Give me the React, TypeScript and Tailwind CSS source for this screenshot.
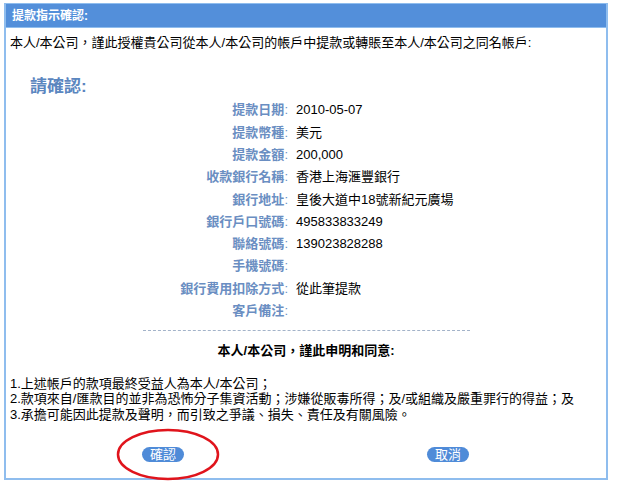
import React from 'react';

const rows: { label: string; value: string }[] = [
  { label: '提款日期', value: '2010-05-07' },
  { label: '提款幣種', value: '美元' },
  { label: '提款金額', value: '200,000' },
  { label: '收款銀行名稱', value: '香港上海滙豐銀行' },
  { label: '銀行地址', value: '皇後大道中18號新紀元廣場' },
  { label: '銀行戶口號碼', value: '495833833249' },
  { label: '聯絡號碼', value: '139023828288' },
  { label: '手機號碼', value: '' },
  { label: '銀行費用扣除方式', value: '從此筆提款' },
  { label: '客戶備注', value: '' },
];

const terms = [
  '1.上述帳戶的款項最終受益人為本人/本公司；',
  '2.款項來自/匯款目的並非為恐怖分子集資活動；涉嫌從販毒所得；及/或組織及嚴重罪行的得益；及',
  '3.承擔可能因此提款及聲明，而引致之爭議、損失、責任及有關風險。',
];

export default function App() {
  return (
    <div
      className="relative h-[498px] w-[635px] bg-white pl-[4px] pt-[3px] text-[13px] text-black"
      style={{ fontFamily: '"Liberation Sans", "Noto Sans CJK TC", sans-serif' }}
    >
      <div className="flex h-[477px] w-[604px] flex-col border-x-2 border-b-2 border-[#8fbdee]">
        {/* header bar */}
        <div className="flex h-[25px] items-center border-y border-[#8fbdee] bg-[#538fda] pl-[6px] text-[12px] font-bold text-white">
          提款指示確認:
        </div>

        <div className="pl-[4px] pt-[6px] leading-[18px]">
          本人/本公司，謹此授權貴公司從本人/本公司的帳戶中提款或轉賬至本人/本公司之同名帳戶:
        </div>

        <div className="mt-[24px] pl-[24px] text-[17px] font-bold leading-[22px] text-[#5b86bf]">請確認:</div>

        <div className="mt-[1px] flex flex-col">
          {rows.map((r) => (
            <div key={r.label} className="flex h-[22.3px] items-center">
              <div className="w-[282px] text-right font-bold text-[#6a8ec2]">
                {r.label}
                <span className="font-normal">:</span>
              </div>
              <div className="pl-[8px]">{r.value}</div>
            </div>
          ))}
        </div>

        <div className="mx-auto mt-[8px] w-[327px] border-t border-dashed border-[#a3b3c9]" />
        <div className="mt-[11px] text-center font-bold leading-[18px]">本人/本公司，謹此申明和同意:</div>

        <div className="mt-[16px] flex flex-col pl-[4px] leading-[15.5px]">
          {terms.map((t) => (
            <div key={t}>{t}</div>
          ))}
        </div>

        <div className="mt-[25px] flex justify-between pl-[136px] pr-[137px]">
          <button className="flex h-[15px] w-[42px] items-center justify-center rounded-full bg-[#4f8bd8] text-[13px] leading-none text-white">
            確認
          </button>
          <button className="flex h-[15px] w-[42px] items-center justify-center rounded-full bg-[#4f8bd8] text-[13px] leading-none text-white">
            取消
          </button>
        </div>
      </div>

      {/* red annotation ellipse */}
      <svg className="absolute left-[116px] top-[428px]" width="104" height="53" viewBox="0 0 104 53">
        <ellipse cx="52" cy="26.5" rx="50" ry="24.5" fill="none" stroke="#e0141c" strokeWidth="2.5" />
      </svg>
    </div>
  );
}
